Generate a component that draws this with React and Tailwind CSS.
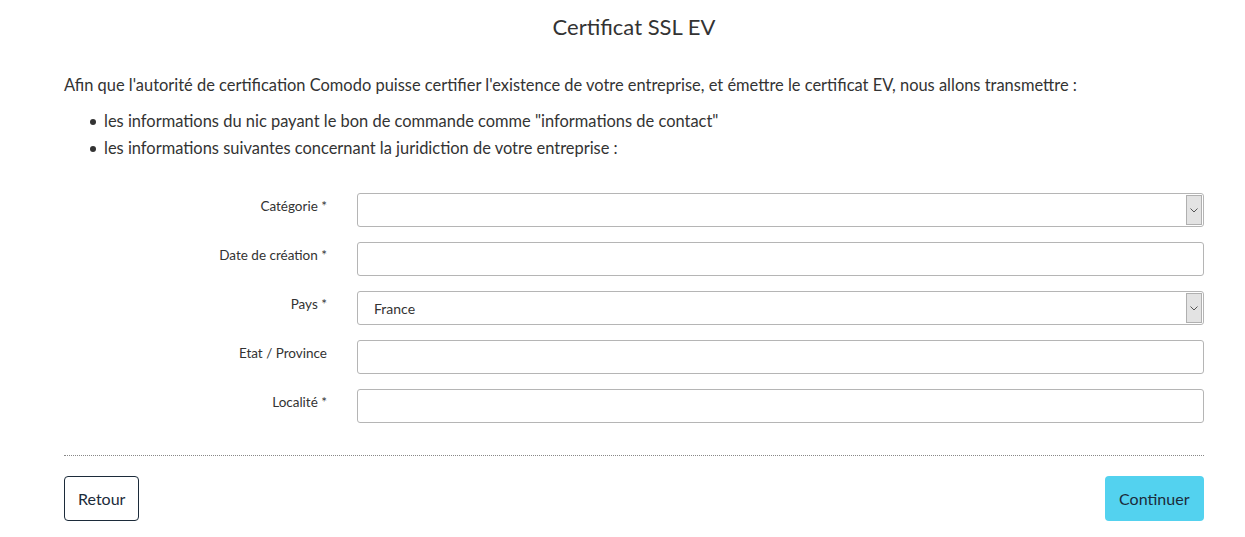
const fields = [
  { label: 'Catégorie *', type: 'select', value: '' },
  { label: 'Date de création *', type: 'input' },
  { label: 'Pays *', type: 'select', value: 'France' },
  { label: 'Etat / Province', type: 'input' },
  { label: 'Localité *', type: 'input' },
]

function SelectBox({ value }) {
  return (
    <div className="flex h-[34px] flex-1 items-stretch rounded-[3px] border border-[#b5b5b5] bg-white">
      <div className="flex flex-1 items-center pl-[16px] text-[14px] text-[#333]">{value}</div>
      <div className="m-[1px] flex w-[16px] items-center justify-center border border-[#b0b0b0] bg-[#e3e3e3]">
        <svg width="8" height="5" viewBox="0 0 8 5" fill="none">
          <path d="M0.5 0.5 L4 4 L7.5 0.5" stroke="#555" strokeWidth="1" />
        </svg>
      </div>
    </div>
  )
}

export default function App() {
  return (
    <div className="min-h-[537px] bg-white font-['Lato',sans-serif] text-[#333]">
      <div className="ml-[64px] w-[1140px] pt-[12px]">
        <h1 className="text-center text-[22px] leading-[30px] text-[#333]">Certificat SSL EV</h1>

        <p className="mt-[30px] text-[16.45px] leading-[27px]">
          Afin que l'autorité de certification Comodo puisse certifier l'existence de votre entreprise, et émettre le certificat EV, nous allons transmettre :
        </p>
        <ul className="mt-[9px] pl-[26px] text-[16.45px] leading-[27px]">
          {[
            'les informations du nic payant le bon de commande comme "informations de contact"',
            'les informations suivantes concernant la juridiction de votre entreprise :',
          ].map((t) => (
            <li key={t} className="flex items-center">
              <span className="mr-[8px] h-[6px] w-[6px] rounded-full bg-[#333]" />
              {t}
            </li>
          ))}
        </ul>

        <div className="mt-[31px] flex flex-col gap-[15px]">
          {fields.map((f) => (
            <div key={f.label} className="flex">
              <label className="w-[293px] shrink-0 pr-[30px] pt-[3px] text-right text-[13.5px] leading-[20px]">
                {f.label}
              </label>
              {f.type === 'select' ? (
                <SelectBox value={f.value} />
              ) : (
                <div className="h-[34px] flex-1 rounded-[3px] border border-[#b5b5b5] bg-white" />
              )}
            </div>
          ))}
        </div>

        <div className="mt-[32px] border-t border-dotted border-[#888]" />

        <div className="mt-[20px] flex justify-between">
          <button className="h-[45px] rounded-[4px] border border-[#1c2b3a] px-[13px] text-[16px] text-[#1c2b3a]">
            Retour
          </button>
          <button className="h-[45px] rounded-[4px] bg-[#53d2ef] px-[14.5px] text-[16px] text-[#1c2b3a]">
            Continuer
          </button>
        </div>
      </div>
    </div>
  )
}
